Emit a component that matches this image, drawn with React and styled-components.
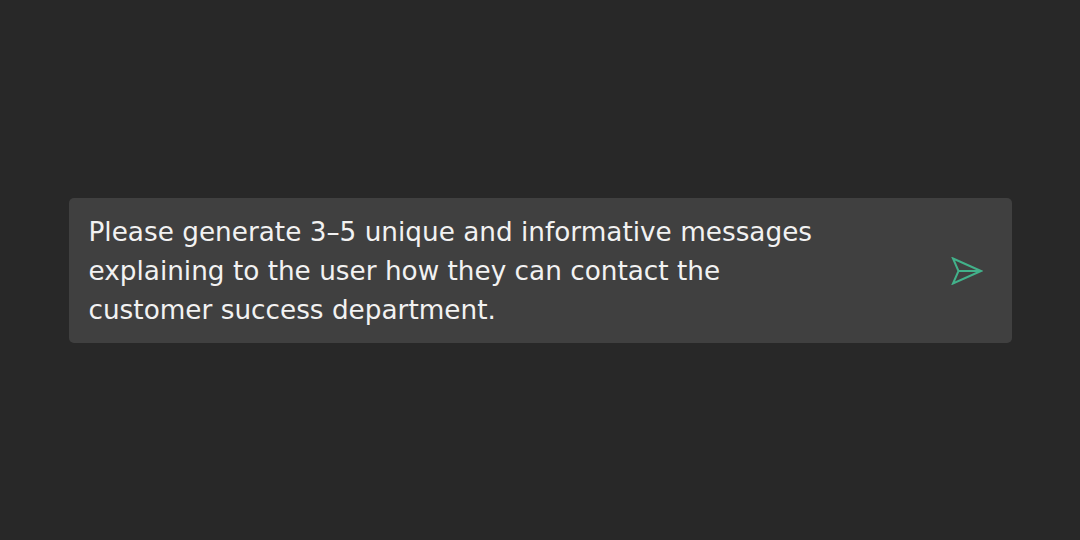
import React from "react";
import styled, { createGlobalStyle } from "styled-components";

const Global = createGlobalStyle`
  html, body { margin: 0; padding: 0; background: #282828; }
  body { font-family: "DejaVu Sans", "Open Sans", sans-serif; }
`;

const Page = styled.div`
  width: 100vw;
  height: 100vh;
  display: flex;
  align-items: center;
  justify-content: center;
  background: #282828;
`;

const Composer = styled.div`
  width: 943px;
  height: 145px;
  box-sizing: border-box;
  background: #404040;
  border-radius: 5px;
  display: flex;
  align-items: center;
  justify-content: space-between;
  padding: 2px 29px 0 20px;
`;

const Prompt = styled.p`
  margin: 0;
  max-width: 740px;
  color: #f2f2f2;
  font-size: 26.3px;
  line-height: 39px;
  font-weight: 400;
`;

const SendButton = styled.button`
  background: none;
  border: none;
  padding: 0;
  width: 32px;
  height: 28px;
  display: flex;
  align-items: center;
  justify-content: center;
  cursor: pointer;
`;

export default function App() {
  return (
    <>
      <Global />
      <Page>
        <Composer>
          <Prompt>
            Please generate 3–5 unique and informative messages explaining to the user how they can
            contact the customer success department.
          </Prompt>
          <SendButton aria-label="Send">
            <svg width="32" height="28" viewBox="0 0 32 28" fill="none">
              <path
                d="M2 1.5 L30 14 L2 26.5 L7.5 14 Z M7.5 14 L30 14"
                stroke="#42b18a"
                strokeWidth="2"
                strokeLinejoin="miter"
              />
            </svg>
          </SendButton>
        </Composer>
      </Page>
    </>
  );
}
